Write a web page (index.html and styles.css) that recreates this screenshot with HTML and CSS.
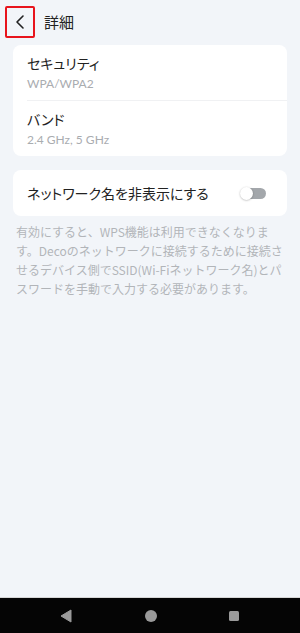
FILE: index.html
```html
<!DOCTYPE html>
<html lang="ja">
<head>
<meta charset="utf-8">
<link rel="stylesheet" href="styles.css">
</head>
<body>
<div class="screen">
  <header class="header">
    <div class="back">
      <svg width="12" height="16" viewBox="0 0 12 16"><path d="M9 2 L3 8 L9 14" fill="none" stroke="#222" stroke-width="1.6" stroke-linecap="round" stroke-linejoin="round"/></svg>
    </div>
    <div class="title">詳細</div>
  </header>
  <main class="main">
    <section class="card">
      <div class="row">
        <div class="label">セキュリティ</div>
        <div class="value">WPA/WPA2</div>
      </div>
      <div class="divider"></div>
      <div class="row">
        <div class="label">バンド</div>
        <div class="value">2.4 GHz, 5 GHz</div>
      </div>
    </section>
    <section class="card toggle-card">
      <div class="label">ネットワーク名を非表示にする</div>
      <div class="switch"><div class="knob"></div></div>
    </section>
    <p class="desc">有効にすると、WPS機能は利用できなくなります。Decoのネットワークに接続するために接続させるデバイス側でSSID(Wi-Fiネットワーク名)とパスワードを手動で入力する必要があります。</p>
  </main>
  <nav class="navbar">
    <svg width="12" height="14" viewBox="0 0 12 14"><path d="M11 1 L11 13 L1 7 Z" fill="#9a9a9a" stroke="#9a9a9a" stroke-width="1" stroke-linejoin="round"/></svg>
    <div class="home"></div>
    <div class="recent"></div>
  </nav>
</div>
</body>
</html>
```
FILE: styles.css
```css
* { box-sizing: border-box; }
html, body { margin: 0; padding: 0; }
body {
  background: #f2f5f9;
  font-family: "Noto Sans CJK JP", "Noto Sans", sans-serif;
  color: #222;
}
.screen {
  width: 300px;
  height: 633px;
  display: flex;
  flex-direction: column;
}
.header {
  height: 45px;
  display: flex;
  align-items: center;
  padding: 0 0 2px 5px;
}
.back {
  width: 30px;
  height: 32px;
  border: 2.5px solid #e8141c;
  border-radius: 2px;
  display: flex;
  align-items: center;
  justify-content: center;
}
.title {
  margin-left: 9px;
  font-size: 15px;
  line-height: 20px;
}
.main {
  flex: 1;
  padding: 0 13px;
}
.card {
  background: #fff;
  border-radius: 8px;
  padding-left: 14px;
}
.row {
  padding: 7px 0 6px;
  height: 55px;
}
.label {
  font-size: 14px;
  line-height: 22px;
  font-feature-settings: "palt";
  color: #222;
}
.value {
  font-family: "Lato", "Noto Sans", sans-serif;
  font-size: 12px;
  line-height: 18px;
  color: #a9acb0;
  margin-top: 1px;
}
.divider {
  height: 1px;
  background: #f0f1f3;
}
.toggle-card {
  margin-top: 14px;
  height: 46px;
  display: flex;
  align-items: center;
  justify-content: space-between;
  padding-right: 21px;
}
.switch {
  position: relative;
  width: 24px;
  height: 11px;
  border-radius: 6px;
  background: #a3a7ab;
}
.knob {
  position: absolute;
  left: -2px;
  top: -1px;
  width: 13px;
  height: 13px;
  border-radius: 50%;
  background: #fff;
  box-shadow: 0 0.5px 2px rgba(0,0,0,0.3);
}
.desc {
  margin: 6px 0 0 3px;
  font-size: 12px;
  line-height: 19px;
  color: #b2b5b9;
}
.navbar {
  height: 36px;
  background: #050505;
  border-top: 1px solid #d6d6d6;
  display: flex;
  align-items: center;
  justify-content: space-between;
  padding: 0 61px 0 60px;
}
.home {
  width: 12px;
  height: 12px;
  border-radius: 50%;
  background: #9a9a9a;
}
.recent {
  width: 10px;
  height: 10px;
  border-radius: 1.5px;
  background: #9a9a9a;
}
```
